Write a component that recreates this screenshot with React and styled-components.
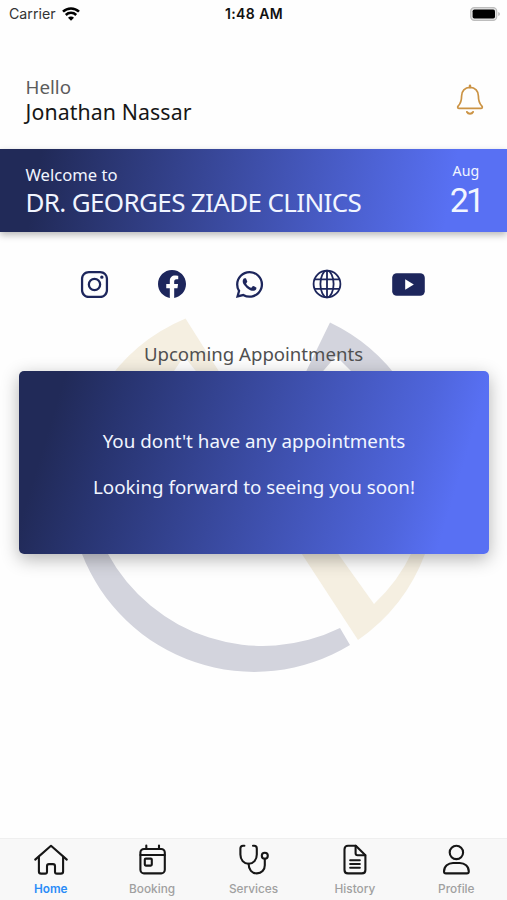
import styled, { createGlobalStyle } from "styled-components";
import {
  IoLogoInstagram,
  IoLogoFacebook,
  IoLogoWhatsapp,
} from "react-icons/io5";

const tabs = [
  { title: "Home", Icon: HomeIcon },
  { title: "Booking", Icon: BookingIcon },
  { title: "Services", Icon: ServicesIcon },
  { title: "History", Icon: HistoryIcon },
  { title: "Profile", Icon: ProfileIcon },
];

export default function App() {
  const currentTab = "Home";

  return (
    <Screen>
      <GlobalStyle />
      <StatusBar>
        <Carrier>
          Carrier
          <WifiIcon />
        </Carrier>
        <Clock>1:48 AM</Clock>
        <BatteryIcon />
      </StatusBar>

      <Header>
        <div>
          <Hello>Hello</Hello>
          <UserName>Jonathan Nassar</UserName>
        </div>
        <BellIcon />
      </Header>

      <Banner>
        <div>
          <WelcomeText>Welcome to</WelcomeText>
          <ClinicName>DR. GEORGES ZIADE CLINICS</ClinicName>
        </div>
        <DateBox>
          <Month>Aug</Month>
          <Day>21</Day>
        </DateBox>
      </Banner>

      <Body>
        <Watermark />
        <SocialRow>
          <SocialLink><IoLogoInstagram size={31} /></SocialLink>
          <SocialLink><IoLogoFacebook size={32} /></SocialLink>
          <SocialLink><IoLogoWhatsapp size={31} /></SocialLink>
          <SocialLink><GlobeIcon /></SocialLink>
          <SocialLink $wide><YoutubeIcon /></SocialLink>
        </SocialRow>
        <SectionTitle>Upcoming Appointments</SectionTitle>
        <Card>
          <CardText>You dont't have any appointments</CardText>
          <CardText>Looking forward to seeing you soon!</CardText>
        </Card>
      </Body>

      <TabBar>
        {tabs.map(({ title, Icon }) => (
          <Tab key={title}>
            <Icon />
            <TabLabel $active={title === currentTab}>{title}</TabLabel>
          </Tab>
        ))}
      </TabBar>
    </Screen>
  );
}

function WifiIcon() {
  return (
    <svg width="18" height="14" viewBox="0 0 18 14" fill="none" stroke="#000" strokeWidth="2.5">
      <path d="M1 4.7a11.3 11.3 0 0 1 16 0" />
      <path d="M3.8 8a7.4 7.4 0 0 1 10.4 0" />
      <path d="M9 13.8 6 10.8a4.2 4.2 0 0 1 6 0z" fill="#000" stroke="none" />
    </svg>
  );
}

function BatteryIcon() {
  return (
    <svg width="31" height="14" viewBox="0 0 31 14">
      <rect x="0.7" y="0.7" width="26" height="12.6" rx="3.6" fill="#e4e4e4" stroke="#bdbdbd" strokeWidth="1.2" />
      <rect x="2.6" y="2.4" width="22.4" height="9.2" rx="1.8" fill="#000" />
      <path d="M28.4 5c1.8.7 1.8 3.3 0 4z" fill="#aaa" />
    </svg>
  );
}

function BellIcon() {
  return (
    <svg width="28" height="32" viewBox="0 0 28 32" fill="none" stroke="#cb9344" strokeWidth="1.7" strokeLinecap="round" strokeLinejoin="round">
      <path d="M14 1.8v1.4" strokeWidth="2.4" />
      <path d="M14 3.4c-5.2 0-8.4 3.6-8.4 8.6 0 5-.9 7.4-3.3 9.900-1.200 1.300-.6 2.500.9 2.500h21.600c1.500 0 2.100-1.200.9-2.500-2.400-2.500-3.300-4.900-3.300-9.900 0-5-3.200-8.600-8.400-8.600z" />
      <path d="M11 28c1.200 2.200 4.800 2.200 6 0" strokeWidth="2" />
    </svg>
  );
}

function GlobeIcon() {
  return (
    <svg width="30" height="30" viewBox="0 0 30 30" fill="none" stroke="currentColor" strokeWidth="1.8">
      <circle cx="15" cy="15" r="13.4" />
      <ellipse cx="15" cy="15" rx="6.6" ry="13.4" />
      <path d="M15 1.6v26.8M2.4 10.4h25.2M2.4 19.8h25.2" />
    </svg>
  );
}

function YoutubeIcon() {
  return (
    <svg width="33" height="23" viewBox="0 0 33 23">
      <rect x="0.2" y="0.2" width="32.6" height="22.6" rx="4.6" fill="currentColor" />
      <path d="M13.2 6.3v10.4l8.6-5.2z" fill="#fff" />
    </svg>
  );
}

function Watermark() {
  return (
    <WatermarkSvg viewBox="0 0 360 370">
      <g fill="#d3d4dd">
        <path d="M0 222L10 250A184.5 184.5 0 0 0 278 341L268 324A176 176 0 0 1 36 250L24 226Z" />
        <path d="M258 18.5A183 183 0 0 1 330 80L292 80L264 52L240 80L228 80Z" />
      </g>
      <g fill="#f5efe1">
        <path d="M113.5 14.5A183 183 0 0 0 30 85L90 85L112 52L138 85L158 85Z" />
        <path d="M226 244L286 336A183 183 0 0 0 353 250L340 248A170 170 0 0 1 302 300L262 244Z" />
      </g>
    </WatermarkSvg>
  );
}

function TabIcon({ children }) {
  return (
    <svg width="36" height="32" viewBox="0 0 36 32" fill="none" stroke="#161616" strokeWidth="2.1" strokeLinecap="round" strokeLinejoin="round">
      {children}
    </svg>
  );
}

function HomeIcon() {
  return (
    <TabIcon>
      <path d="M2.2 15.6 18 1.8l15.8 13.8" />
      <path d="M5.9 12.8v14.6c0 1.4.8 2.2 2.2 2.2h4c1.2 0 1.9-.7 1.9-1.9v-5.5c0-1.3.8-2.1 2-2.1h4c1.2 0 2 .8 2 2.1v5.5c0 1.2.7 1.9 1.9 1.9h4c1.4 0 2.2-.8 2.2-2.2V12.8" />
    </TabIcon>
  );
}

function BookingIcon() {
  return (
    <TabIcon>
      <rect x="6.4" y="5" width="24.4" height="24.4" rx="3.6" />
      <path d="M6.4 11h24.4M12.3 1.6V5M25 1.6V5" />
      <rect x="10.8" y="14.6" width="7" height="7" rx="1" />
    </TabIcon>
  );
}

function ServicesIcon() {
  return (
    <TabIcon>
      <path d="M8.4 1.7H7c-1.7 0-2.6 1-2.6 2.7v6.2c0 5.2 3.3 9.2 8.2 9.2s8.2-4 8.2-9.2V4.4c0-1.7-.9-2.7-2.6-2.7H17" />
      <path d="M12.6 19.8c0 6 3.4 9.6 8.2 9.6s8-3.4 8-8.2v-6.4" />
      <circle cx="28.8" cy="11.8" r="3" />
    </TabIcon>
  );
}

function HistoryIcon() {
  return (
    <TabIcon>
      <path d="M18.8 1.8H11c-2.2 0-3.5 1.3-3.5 3.5v20.6c0 2.2 1.3 3.5 3.5 3.5h13.9c2.2 0 3.5-1.3 3.5-3.5V11.2z" />
      <path d="M18.6 1.8v7.4c0 1.3.7 2 2 2h7.6" />
      <path d="M13.2 16.2h9.6M13.2 20h9.6M13.2 23.8h9.6" />
    </TabIcon>
  );
}

function ProfileIcon() {
  return (
    <TabIcon>
      <circle cx="18.4" cy="8.4" r="6.7" />
      <path d="M6 27.4c0-5 4.2-8.4 9-8.4h6.8c4.8 0 9 3.4 9 8.4 0 1.3-.7 2-2 2H8c-1.3 0-2-.7-2-2z" />
    </TabIcon>
  );
}

const GlobalStyle = createGlobalStyle`
  * {
    box-sizing: border-box;
  }
  body {
    margin: 0;
    background-color: #fff;
  }
  p {
    margin: 0;
    white-space: nowrap;
  }
  svg {
    display: block;
    flex-shrink: 0;
  }
`;
const Screen = styled.div`
  display: flex;
  flex-direction: column;
  width: 507px;
  height: 900px;
  overflow: hidden;
  background-color: #fefefe;
  font-family: "Noto Sans", sans-serif;
`;
const StatusBar = styled.div`
  display: grid;
  grid-template-columns: 1fr auto 1fr;
  align-items: center;
  height: 27px;
  padding: 0 6px 0 9px;
  font-family: Inter, sans-serif;
  color: #111;
  & > svg {
    justify-self: end;
  }
`;
const Carrier = styled.div`
  display: flex;
  align-items: center;
  gap: 6px;
  font-size: 14.2px;
  color: #333;
`;
const Clock = styled.p`
  margin-right: 2px;
  font-size: 14px;
  font-weight: 600;
  letter-spacing: 0.4px;
`;
const Header = styled.div`
  display: flex;
  justify-content: space-between;
  height: 122px;
  padding: 48px 23.5px 0 25.5px;
  & > svg {
    margin-top: 9px;
  }
`;
const Hello = styled.p`
  font-size: 18.8px;
  line-height: 24px;
  color: #5c5c5c;
`;
const UserName = styled.p`
  font-size: 21.3px;
  line-height: 25px;
  letter-spacing: 0.1px;
  color: #161616;
`;
const Banner = styled.div`
  display: flex;
  justify-content: space-between;
  height: 83px;
  padding: 12px 25px 0 25.5px;
  background: linear-gradient(100deg, #212a58 8%, #5870f3 88%);
  box-shadow: 0 3px 7px rgba(0, 0, 0, 0.28);
  color: #f1f5ff;
  z-index: 1;
`;
const WelcomeText = styled.p`
  font-size: 16.6px;
  line-height: 28px;
`;
const ClinicName = styled.p`
  font-size: 26px;
  line-height: 26px;
  letter-spacing: -0.65px;
`;
const DateBox = styled.div`
  display: flex;
  flex-direction: column;
  align-items: center;
`;
const Month = styled.p`
  font-size: 14.2px;
  line-height: 19px;
`;
const Day = styled.p`
  font-family: Roboto, sans-serif;
  font-size: 34px;
  line-height: 41px;
  letter-spacing: -3px;
`;
const Body = styled.div`
  position: relative;
  flex: 1;
`;
/* sits behind the icons and the card */
const WatermarkSvg = styled.svg`
  position: absolute;
  top: 72px;
  left: 72px;
  width: 360px;
  height: 370px;
`;
const SocialRow = styled.div`
  position: relative;
  display: flex;
  gap: 45.7px;
  align-items: center;
  height: 32px;
  margin-top: 36px;
  padding-left: 78.3px;
`;
const SocialLink = styled.a`
  display: flex;
  justify-content: center;
  width: ${(props) => (props.$wide ? "39px" : "32px")};
  color: #1d265c;
`;
const SectionTitle = styled.p`
  position: relative;
  margin-top: 41px;
  font-size: 18.6px;
  line-height: 26px;
  text-align: center;
  color: #505050;
`;
const Card = styled.div`
  position: relative;
  display: flex;
  flex-direction: column;
  align-items: center;
  height: 183px;
  margin: 4px 18px 0 19px;
  padding-top: 57px;
  gap: 20px;
  border-radius: 5px;
  background: linear-gradient(107deg, #212a58 9%, #283470 21%, #4f65dc 80%, #5870f3 90%);
  box-shadow: 0 5px 18px rgba(0, 0, 0, 0.3);
`;
const CardText = styled.p`
  font-size: 18.8px;
  line-height: 26px;
  color: #f1f5ff;
`;
const TabBar = styled.div`
  display: flex;
  height: 62px;
  border-top: 1px solid #efefef;
  background-color: #f8f8f8;
  font-family: Inter, sans-serif;
`;
const Tab = styled.div`
  flex: 1;
  display: flex;
  flex-direction: column;
  align-items: center;
  padding-top: 5px;
`;
const TabLabel = styled.p`
  margin-top: 6px;
  font-size: 11.8px;
  line-height: 14px;
  font-weight: ${(props) => (props.$active ? 600 : 500)};
  color: ${(props) => (props.$active ? "#2a8cf7" : "#a0a0a0")};
`;
